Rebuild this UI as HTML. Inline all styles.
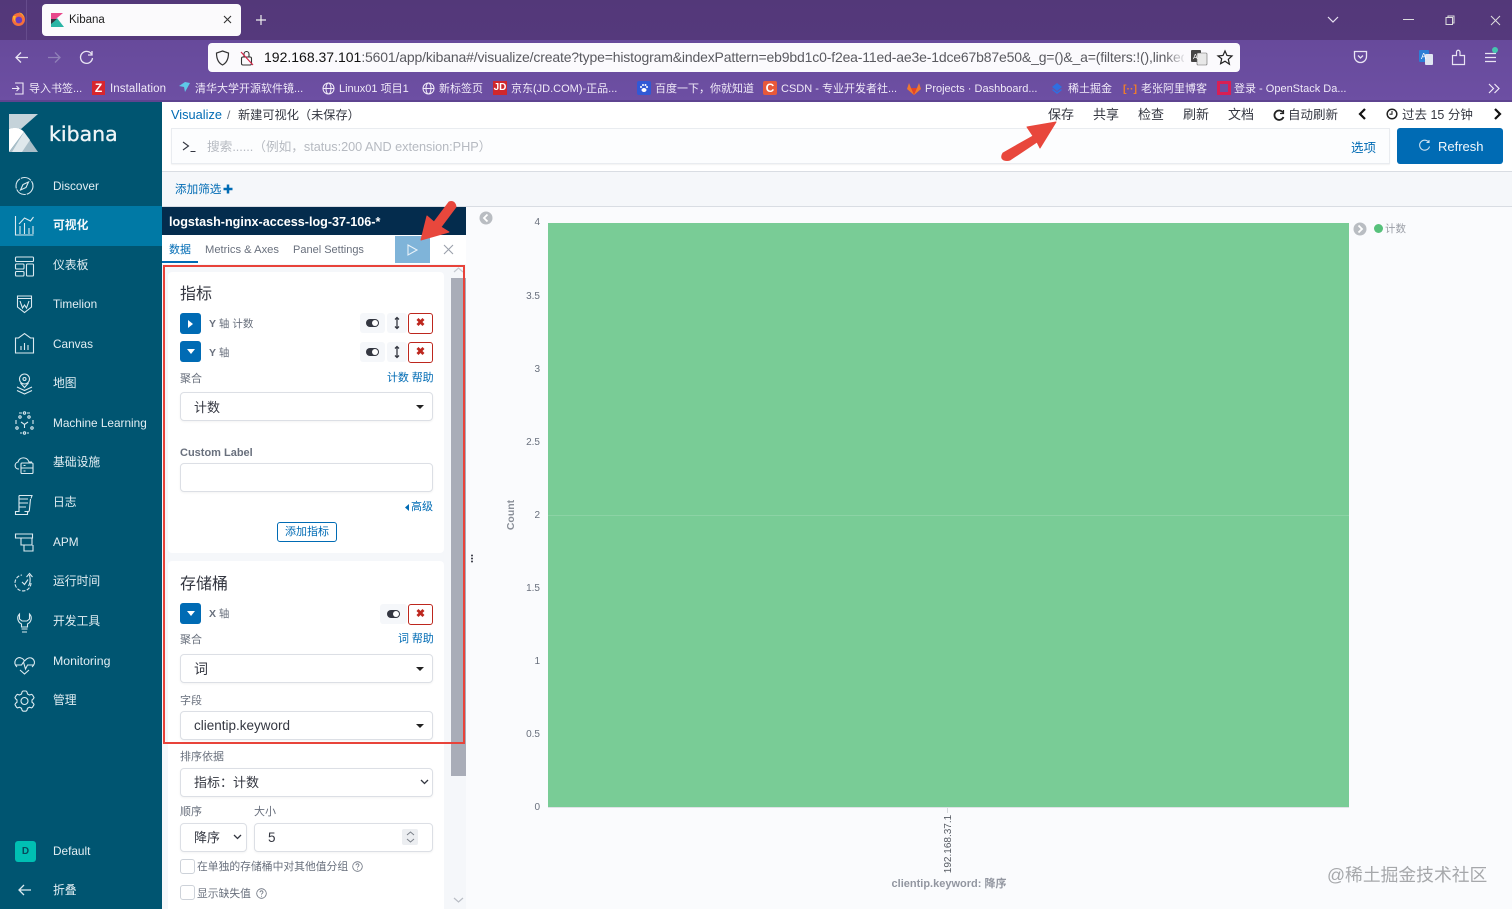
<!DOCTYPE html>
<html lang="zh"><head><meta charset="utf-8"><title>Kibana</title>
<style>
html,body{margin:0;padding:0;width:1512px;height:909px;overflow:hidden;background:#fafbfd}
body{position:relative;font-family:"Liberation Sans","Noto Sans CJK SC",sans-serif;}
.a{position:absolute}
.t{position:absolute;white-space:nowrap;line-height:16px;height:16px}
svg{position:absolute;overflow:visible}
.nav{color:#e2eef3;font-size:11.800px;left:53px}
.bm{color:#f0eaf8;font-size:11px;top:81px}
.top{color:#343741;font-size:13px;top:107px}
.lb{color:#69707d;font-size:11px;margin-top:.5px}
.blue{color:#006bb4}
.sel{position:absolute;left:180px;width:251px;height:27px;background:#fff;border:1px solid #dcdfe5;border-radius:4px;box-shadow:0 1px 2px rgba(0,0,0,.05)}
.sel span{position:absolute;left:13px;top:0;line-height:28px;font-size:13.500px;color:#343741;white-space:nowrap}
.caret{position:absolute;width:0;height:0;border-left:4px solid transparent;border-right:4px solid transparent;border-top:4px solid #222}
.ib{position:absolute;width:21px;height:21px;border-radius:3px;background:#006bb4}
.ib2{position:absolute;background:#f5f7fa;border-radius:3px;height:20px}
.x{position:absolute;width:23px;height:19px;border:1px solid #bd271e;border-radius:3px;background:#fff;color:#bd271e;text-align:center;line-height:19px;font-size:11px;font-weight:bold}
.ytick{position:absolute;left:510px;width:30px;text-align:right;color:#69707d;font-size:10px;line-height:12px}
</style></head><body>

<!-- Browser chrome -->
<div class="a" style="left:0;top:0;width:1512px;height:40px;background:linear-gradient(#533879,#55397c)"></div>
<div class="a" style="left:0;top:40px;width:1512px;height:60px;background:linear-gradient(#674a9b,#6d4fa3)"></div>
<div class="a" style="left:0;top:100px;width:1512px;height:2px;background:#5e4490"></div>
<div class="a" style="left:26px;top:0;width:1px;height:40px;background:#664c8c"></div>
<!-- firefox icon -->
<svg style="left:11px;top:11px" width="15" height="16" viewBox="0 0 15 16"><circle cx="7.500" cy="8.500" r="6.500" fill="#f5703a"/><circle cx="7.800" cy="9" r="3.400" fill="#6a3cc0"/><path d="M7 1c2 1 5 3 6 6 0-2-1-4-3-5zM2 5c0 3 1 5 3 6-1-2-1-4 0-6z" fill="#ffb52e"/></svg>
<!-- tab -->
<div class="a" style="left:42px;top:4px;width:199px;height:32px;background:#fbfafc;border-radius:4px"></div>
<svg style="left:51px;top:13px" width="13" height="14" viewBox="0 0 13 14"><path d="M0 0h12L0 10z" fill="#e8478b"/><path d="M0 14V10l6-5 7 9z" fill="#2ab5a5"/><path d="M0 6l5 0 1 0-6 5z" fill="#343741"/></svg>
<div class="t" style="left:69px;top:12px;font-size:11.500px;color:#222">Kibana</div>
<svg style="left:223px;top:15px" width="9" height="9" fill="none" stroke="#333" stroke-width="1.100"><path d="M1 1l7 7M8 1L1 8"/></svg>
<svg style="left:255px;top:14px" width="12" height="12" fill="none" stroke="#eee" stroke-width="1.200"><path d="M6 1v10M1 6h10"/></svg>
<!-- window controls -->
<svg style="left:1327px;top:15px" width="13" height="9" fill="none" stroke="#e8e2f2" stroke-width="1.200"><path d="M1 2l5 5 5-5"/></svg>
<svg style="left:1403px;top:19px" width="11" height="2"><rect width="11" height="1" fill="#ddd"/></svg>
<svg style="left:1445px;top:15px" width="11" height="11" fill="none" stroke="#ddd"><rect x="1" y="2.500" width="6.500" height="7"/><path d="M3 2.500V1h6v7H7.500"/></svg>
<svg style="left:1490px;top:15px" width="11" height="11" fill="none" stroke="#ddd"><path d="M1 1l9 9M10 1l-9 9"/></svg>
<!-- nav buttons -->
<svg style="left:15px;top:51px" width="14" height="13" fill="none" stroke="#e9e4f3" stroke-width="1.300"><path d="M13 6.500H1M6 1.500l-5 5 5 5"/></svg>
<svg style="left:47px;top:51px" width="14" height="13" fill="none" stroke="#9080b8" stroke-width="1.300"><path d="M1 6.500h12M8 1.500l5 5-5 5"/></svg>
<svg style="left:79px;top:50px" width="15" height="15" fill="none" stroke="#e9e4f3" stroke-width="1.300"><path d="M12.500 4A6 6 0 1 0 13.500 8M13 1v4H9"/></svg>
<!-- url bar -->
<div class="a" style="left:208px;top:43px;width:1032px;height:29px;background:#fbfafd;border-radius:4px"></div>
<svg style="left:215px;top:50px" width="15" height="16" fill="none" stroke="#333" stroke-width="1.200"><path d="M7.500 1l6 2c0 6-2 10-6 12C3.500 13 1.500 9 1.500 3z"/></svg>
<svg style="left:240px;top:50px" width="14" height="16" fill="none" stroke="#333" stroke-width="1.100"><rect x="1.500" y="7" width="10" height="8" rx="1.500"/><path d="M4 7V4a2.500 2.500 0 0 1 5 0v3"/><path d="M1 2l12 13" stroke="#d7264a" stroke-width="1.200"/></svg>
<div class="t" style="left:264px;top:49px;font-size:14px;line-height:17px;height:17px;width:920px;overflow:hidden;color:#5a5a60;letter-spacing:-.165px"><span style="color:#111;letter-spacing:0">192.168.37.101</span>:5601/app/kibana#/visualize/create?type=histogram&amp;indexPattern=eb9bd1c0-f2ea-11ed-ae3e-1dce67b87e50&amp;_g=()&amp;_a=(filters:!(),linked:!</div>
<div class="a" style="left:1165px;top:43px;width:22px;height:29px;background:linear-gradient(90deg,rgba(251,250,253,0),#fbfafd)"></div>
<svg style="left:1191px;top:50px" width="17" height="15"><rect x="0" y="0" width="10" height="12" rx="1" fill="#444"/><rect x="6" y="3" width="10" height="12" rx="1" fill="#e8e8e8" stroke="#666" stroke-width=".6"/><text x="2" y="9" font-size="7" fill="#fff" font-family="Liberation Sans">A</text></svg>
<svg style="left:1217px;top:50px" width="16" height="15" fill="none" stroke="#222" stroke-width="1.200"><path d="M8 1l2 4.500 5 .5-3.700 3.300 1.100 4.900L8 11.200 3.600 13.700l1.100-4.900L1 6l5-.5z"/></svg>
<svg style="left:1353px;top:50px" width="15" height="14" fill="none" stroke="#e9e4f3" stroke-width="1.300"><path d="M1.500 1.500h12v5a6 6 0 0 1-12 0z"/><path d="M5 5.500l2.500 2.500L10 5.500"/></svg>
<svg style="left:1418px;top:49px" width="16" height="17"><rect x="1" y="1" width="10" height="12" rx="1" fill="#2c7fd6"/><rect x="7" y="5" width="8" height="11" rx="1" fill="#dfe6f2"/><text x="3" y="10" font-size="8" fill="#fff" font-family="Liberation Sans">A</text></svg>
<svg style="left:1451px;top:49px" width="15" height="17" fill="none" stroke="#e9e4f3" stroke-width="1.200"><path d="M1.500 6.500h4V3a1.700 1.700 0 0 1 3.500 0v3.500h4.500v9h-12z"/></svg>
<svg style="left:1484px;top:52px" width="13" height="11" fill="none" stroke="#e9e4f3" stroke-width="1.200"><path d="M1 1.500h11M1 5.500h11M1 9.500h11"/></svg>
<div class="a" style="left:1492px;top:47px;width:6px;height:6px;border-radius:50%;background:#45c4b0"></div>
<!-- bookmarks -->
<svg style="left:11px;top:82px" width="13" height="13" fill="none" stroke="#f0eaf8" stroke-width="1.100"><path d="M4 1h8v11H4M1 6.500h7M5.500 4l2.500 2.500L5.500 9"/></svg>
<div class="t bm" style="left:29px">导入书签...</div>
<div class="a" style="left:92px;top:81px;width:13px;height:14px;background:#d8262e;color:#fff;font:bold 12px/14px 'Liberation Sans';text-align:center">Z</div>
<div class="t bm" style="left:110px;font-size:11.500px;letter-spacing:.1px">Installation</div>
<svg style="left:178px;top:81px" width="13" height="13"><path d="M1 5l6-4 5 1-5 9-1-5z" fill="#5ec8e8"/></svg>
<div class="t bm" style="left:195px">清华大学开源软件镜...</div>
<svg style="left:322px;top:82px" width="13" height="13" fill="none" stroke="#f0eaf8"><circle cx="6.500" cy="6.500" r="5.500"/><ellipse cx="6.500" cy="6.500" rx="2.500" ry="5.500"/><path d="M1 6.500h11"/></svg>
<div class="t bm" style="left:339px">Linux01 项目1</div>
<svg style="left:422px;top:82px" width="13" height="13" fill="none" stroke="#f0eaf8"><circle cx="6.500" cy="6.500" r="5.500"/><ellipse cx="6.500" cy="6.500" rx="2.500" ry="5.500"/><path d="M1 6.500h11"/></svg>
<div class="t bm" style="left:439px">新标签页</div>
<div class="a" style="left:493px;top:81px;width:14px;height:14px;background:#d0272c;color:#fff;font:bold 10px/14px 'Liberation Sans';text-align:center">JD</div>
<div class="t bm" style="left:511px">京东(JD.COM)-正品...</div>
<div class="a" style="left:637px;top:81px;width:14px;height:14px;background:#3159d6;border-radius:2px"></div>
<svg style="left:639px;top:83px" width="10" height="10"><ellipse cx="5" cy="7" rx="2.500" ry="2" fill="#fff"/><circle cx="2" cy="4" r="1" fill="#fff"/><circle cx="8" cy="4" r="1" fill="#fff"/><circle cx="4" cy="2" r="1" fill="#fff"/><circle cx="6.500" cy="2" r="1" fill="#fff"/></svg>
<div class="t bm" style="left:655px">百度一下，你就知道</div>
<div class="a" style="left:763px;top:81px;width:14px;height:14px;background:#e8593a;color:#fff;font:bold 12px/14px 'Liberation Sans';text-align:center;border-radius:2px">C</div>
<div class="t bm" style="left:781px">CSDN - 专业开发者社...</div>
<svg style="left:907px;top:82px" width="14" height="13"><path d="M7 13L0 7l2-6 2 5h6l2-5 2 6z" fill="#f0782e"/><path d="M7 13L4 6h6z" fill="#e24329"/></svg>
<div class="t bm" style="left:925px">Projects · Dashboard...</div>
<svg style="left:1050px;top:81px" width="14" height="14"><path d="M7 2l5 4-5 4-5-4z" fill="#2f6fe0"/><path d="M3 8l4 3 4-3 1 1-5 4-5-4z" fill="#2f6fe0"/></svg>
<div class="t bm" style="left:1068px">稀土掘金</div>
<div class="t" style="left:1123px;top:81px;color:#f07e2a;font-size:10.500px;font-weight:bold">[··]</div>
<div class="t bm" style="left:1141px">老张阿里博客</div>
<div class="a" style="left:1217px;top:81px;width:14px;height:14px;background:#d91f55"></div>
<div class="a" style="left:1220px;top:84px;width:8px;height:8px;background:#6d4fa3"></div>
<div class="t bm" style="left:1234px">登录 - OpenStack Da...</div>
<svg style="left:1488px;top:83px" width="12" height="11" fill="none" stroke="#f0eaf8" stroke-width="1.200"><path d="M1 1l4.500 4.500L1 10M6.500 1L11 5.500 6.500 10"/></svg>

<!-- Sidebar -->
<div class="a" style="left:0;top:102px;width:162px;height:807px;background:#005571"></div>
<div class="a" style="left:0;top:206px;width:162px;height:40px;background:#0079a5"></div>
<svg style="left:9px;top:114px" width="30" height="38" viewBox="0 0 30 38"><path d="M0 0h29L12 15C8 14 3 14 0 15z" fill="#c5d3da"/><path d="M0 15c6-2 12-1 15 3L0 38z" fill="#fff"/><path d="M15 18l14 20H0z" fill="#a9bec8"/><path d="M15 18L3 38h10l8-12z" fill="#dfe8ec"/></svg>
<div class="t" style="left:49px;top:120px;height:28px;line-height:28px;color:#eef5f7;font-family:'DejaVu Sans',sans-serif;font-size:20.500px;-webkit-text-stroke:.35px #eef5f7">kibana</div>

<div class="t nav" style="top:178px">Discover</div>
<div class="t nav" style="top:217px;font-weight:bold;color:#f2f8fb">可视化</div>
<div class="t nav" style="top:257px">仪表板</div>
<div class="t nav" style="top:296px">Timelion</div>
<div class="t nav" style="top:336px">Canvas</div>
<div class="t nav" style="top:375px">地图</div>
<div class="t nav" style="top:415px">Machine Learning</div>
<div class="t nav" style="top:454px">基础设施</div>
<div class="t nav" style="top:494px">日志</div>
<div class="t nav" style="top:534px">APM</div>
<div class="t nav" style="top:573px">运行时间</div>
<div class="t nav" style="top:613px">开发工具</div>
<div class="t nav" style="top:653px;font-size:12.300px">Monitoring</div>
<div class="t nav" style="top:692px">管理</div>
<div class="t nav" style="top:843px">Default</div>
<div class="t nav" style="top:882px">折叠</div>

<svg style="left:0;top:102px" width="162" height="807" fill="none" stroke="#dbeaf0" stroke-width="1.100">
 <!-- discover center 24,84 -->
 <circle cx="24.500" cy="84" r="8.500" stroke-dasharray="11 1"/><path d="M28.500 80l-5.500 2.500-2.500 5.500 5.500-2.500z"/>
 <!-- visualize -->
 <path d="M15.500 114v19h18M20 132v-8M24.500 132v-11M29 132v-6M33 132v-8M19 122l5.500-6 6 3 3-4"/>
 <!-- dashboard -->
 <rect x="15.500" y="155" width="18" height="4.500" rx="1"/><rect x="15.500" y="162" width="8.500" height="5" rx="1"/><rect x="15.500" y="169.500" width="8.500" height="4.500" rx="1"/><rect x="26.500" y="162" width="7" height="12" rx="1"/>
 <!-- timelion -->
 <path d="M17.500 194h14v11l-7 5.500-7-5.500zM17.500 196.500h14M20 199l2.500 7 2-3 2 3 2.500-7"/>
 <!-- canvas -->
 <path d="M15.500 236h3l6-4.500 6 4.500h3v15h-18zM21 248v-4M24.500 248v-7M28 248v-5"/>
 <!-- maps -->
 <circle cx="24.500" cy="277" r="5"/><circle cx="24.500" cy="277" r="1.500"/><path d="M20.500 281l4 4.500 4-4.500M17 285l7.500 3.500 7.500-3.500M17 288.500l7.500 3.500 7.500-3.500"/>
 <!-- ML -->
 <path d="M19 311h3M27 311h3M16 318v4M33 318v4M20 331h2M27 331h2M21 320l3.500 2.500 3.500-2.500M24.500 322v4"/><circle cx="20" cy="315" r="1.200"/><circle cx="29" cy="315" r="1.200"/><circle cx="24.500" cy="311" r="1.200"/><circle cx="24.500" cy="331" r="1.200"/><circle cx="17" cy="326" r="1.200"/><circle cx="32" cy="326" r="1.200"/>
 <!-- infra -->
 <path d="M19 367c-5 0-5-6-1-7 1-5 9-6 11 0h3"/><rect x="21" y="361" width="12" height="10.500" rx="1"/><path d="M21 366h12M23.500 363.500h2M23.500 369h2"/>
 <!-- logs -->
 <path d="M19 393.500h13l-1 3M19 393.500v16h-3.500v3h12v-3h-3M19 397h9M19 401h9M19 405h7M27.500 410c1.500 0 2-1 2-3l1-10"/>
 <!-- APM -->
 <path d="M15.500 432v4h17v-4zM21 436v7h11v-7M24 443v6h9v-6"/>
 <!-- uptime -->
 <path d="M31 481a8 8 0 1 1-9-8" stroke-dasharray="3.500 1.500"/><path d="M22 480l2.500 2.500 3.500-5M28.500 484c2-3 2-7 1-11M26.500 475l3-3.500 3 3.500"/>
 <!-- dev tools -->
 <path d="M19.500 512c-3 3-2 8 2 10v3h6v-3c4-2 5-7 2-10v5l-2.500 2h-5l-2.500-2zM21.500 527h6M22 530h5"/>
 <!-- monitoring -->
 <path d="M17 565c-5-5 0-11 4-9 2 .5 3 2 3.500 3 1-1 2-2.500 4-3 4-1.500 9 4 3.500 9M15.500 563h6l2-3 2 7 2-4h6M20 568l4.500 4 4.500-4"/>
 <!-- gear -->
 <circle cx="24.500" cy="599" r="3.500"/><path d="M22 590l1-1h3l1 1 .5 2 2 1 2-.7 1 .7 1.500 2.500-.5 1.200-1.500 1.300v2.200l1.500 1.300.5 1.200-1.500 2.500-1 .7-2-.7-2 1-.5 2-1 1h-3l-1-1-.5-2-2-1-2 .7-1-.7-1.500-2.500.5-1.200 1.500-1.300V598l-1.500-1.300-.5-1.200 1.500-2.500 1-.7 2 .7 2-1z"/>
 <!-- collapse -->
 <path d="M31 788H19M24 783l-5 5 5 5" stroke-width="1.300"/>
</svg>
<div class="a" style="left:15px;top:841px;width:21px;height:21px;background:#00bfb3;border-radius:3px;color:#064a5c;font-size:10px;font-weight:bold;line-height:21px;text-align:center">D</div>

<!-- Top bar -->
<div class="a" style="left:162px;top:102px;width:1350px;height:70px;background:#fff;border-bottom:1px solid #d9dde3;box-sizing:border-box"></div>
<div class="t" style="left:171px;top:107px;font-size:12.800px;color:#006bb4">Visualize</div>
<div class="t" style="left:227px;top:107px;font-size:12px;color:#69707d">/</div>
<div class="t" style="left:238px;top:107px;font-size:12.200px;color:#343741">新建可视化（未保存）</div>
<div class="t top" style="left:1048px">保存</div>
<div class="t top" style="left:1093px">共享</div>
<div class="t top" style="left:1138px">检查</div>
<div class="t top" style="left:1183px">刷新</div>
<div class="t top" style="left:1228px">文档</div>
<svg style="left:1273px;top:109px" width="12" height="12" fill="none" stroke="#222" stroke-width="1.800"><path d="M10 3.500A4.700 4.700 0 1 0 10.500 8"/><path d="M10.500 1v3.500H7" stroke-width="1.200"/></svg>
<div class="t top" style="left:1288px;font-size:12.500px">自动刷新</div>
<svg style="left:1358px;top:108px" width="9" height="12" fill="none" stroke="#111" stroke-width="2.200"><path d="M7 1L2 6l5 5"/></svg>
<svg style="left:1386px;top:108px" width="12" height="12" fill="none" stroke="#222" stroke-width="1.500"><circle cx="6" cy="6" r="4.800"/><path d="M6 3v3.200H3.500" stroke-width="1.100"/></svg>
<div class="t top" style="left:1402px;font-size:12.500px">过去 15 分钟</div>
<svg style="left:1493px;top:108px" width="9" height="12" fill="none" stroke="#111" stroke-width="2.200"><path d="M2 1l5 5-5 5"/></svg>
<!-- search -->
<div class="a" style="left:171px;top:128px;width:1219px;height:36px;box-sizing:border-box;background:#fcfdfe;border:1px solid #e9ecf0;box-shadow:0 1px 1px rgba(0,0,0,.05)"></div>
<svg style="left:182px;top:141px" width="14" height="12" fill="none" stroke="#343741" stroke-width="1.100"><path d="M1 1l5.500 4L1 9M8.500 10.500h5"/></svg>
<div class="t" style="left:207px;top:139px;font-size:12.700px;color:#b6bac1;letter-spacing:-.03px">搜索......（例如，status:200 AND extension:PHP）</div>
<div class="t" style="left:1351px;top:140px;font-size:12.500px;color:#006bb4">选项</div>
<div class="a" style="left:1397px;top:128px;width:106px;height:36px;background:#006bb4;border-radius:3px"></div>
<svg style="left:1418px;top:139px" width="13" height="13" fill="none" stroke="#cfe2f1" stroke-width="1.100"><path d="M10.500 3A5 5 0 1 0 11.500 7.500M11 1v2.500H8.500"/></svg>
<div class="t" style="left:1438px;top:139px;font-size:13px;color:#f2f8fc">Refresh</div>
<!-- filter bar -->
<div class="a" style="left:162px;top:172px;width:1350px;height:35px;background:#f5f7fa;border-bottom:1px solid #d9dde3;box-sizing:border-box"></div>
<div class="t blue" style="left:175px;top:182px;font-size:11.600px">添加筛选</div>
<svg style="left:223px;top:184px" width="10" height="10" fill="none" stroke="#006bb4" stroke-width="2.500"><path d="M5 .5v9M.5 5h9"/></svg>

<!-- Left panel -->
<div class="a" style="left:162px;top:207px;width:304px;height:702px;background:#f5f7fa"></div>
<div class="a" style="left:162px;top:207px;width:304px;height:28px;background:#042c4d"></div>
<div class="t" style="left:169px;top:213.500px;font-size:12.600px;font-weight:bold;color:#fff">logstash-nginx-access-log-37-106-*</div>
<div class="a" style="left:162px;top:235px;width:304px;height:29px;background:#fff"></div>
<div class="t blue" style="left:169px;top:242px;font-size:11px">数据</div>
<div class="a" style="left:162px;top:261px;width:36px;height:2px;background:#006bb4"></div>
<div class="t" style="left:205px;top:242px;font-size:11.200px;color:#69707d">Metrics &amp; Axes</div>
<div class="t" style="left:293px;top:242px;font-size:11px;color:#69707d">Panel Settings</div>
<div class="a" style="left:395px;top:236px;width:35px;height:27px;background:#7fb4d9"></div>
<svg style="left:407px;top:244px" width="11" height="12" fill="none" stroke="#e8f2f9" stroke-width="1.100"><path d="M1 1l9 5-9 5z"/></svg>
<svg style="left:443px;top:244px" width="11" height="11" fill="none" stroke="#9aa0ab" stroke-width="1.100"><path d="M1 1l9 9M10 1l-9 9"/></svg>

<!-- cards -->
<div class="a" style="left:168px;top:272px;width:276px;height:281px;background:#fff;border-radius:4px"></div>
<div class="a" style="left:168px;top:561px;width:276px;height:348px;background:#fff;border-radius:4px 4px 0 0"></div>
<div class="t" style="left:180px;top:287px;height:20px;line-height:16px;font-size:16px;color:#343741">指标</div>

<div class="ib" style="left:180px;top:313px"></div>
<svg style="left:188px;top:320px" width="6" height="8"><path d="M0 0l5 4-5 4z" fill="#fff"/></svg>
<div class="t lb" style="left:209px;top:315px;font-size:10.500px"><b>Y</b> 轴 计数</div>
<div class="ib2" style="left:360px;top:313px;width:25px"></div>
<div class="ib2" style="left:387px;top:313px;width:20px"></div>
<svg style="left:366px;top:319px" width="13" height="8"><rect width="13" height="8" rx="4" fill="#343741"/><circle cx="9" cy="4" r="3" fill="#fff"/></svg>
<svg style="left:394px;top:317px" width="6" height="12" fill="none" stroke="#343741" stroke-width="1.300"><path d="M3 1v10M1 2.500L3 .5l2 2M1 9.500l2 2 2-2"/></svg>
<div class="x" style="left:408px;top:313px">✖</div>

<div class="ib" style="left:180px;top:341px"></div>
<svg style="left:187px;top:349px" width="8" height="6"><path d="M0 0h8L4 5z" fill="#fff"/></svg>
<div class="t lb" style="left:209px;top:344px;font-size:10.500px"><b>Y</b> 轴</div>
<div class="ib2" style="left:360px;top:342px;width:25px"></div>
<div class="ib2" style="left:387px;top:342px;width:20px"></div>
<svg style="left:366px;top:348px" width="13" height="8"><rect width="13" height="8" rx="4" fill="#343741"/><circle cx="9" cy="4" r="3" fill="#fff"/></svg>
<svg style="left:394px;top:346px" width="6" height="12" fill="none" stroke="#343741" stroke-width="1.300"><path d="M3 1v10M1 2.500L3 .5l2 2M1 9.500l2 2 2-2"/></svg>
<div class="x" style="left:408px;top:342px">✖</div>

<div class="t lb" style="left:180px;top:370px">聚合</div>
<div class="t blue" style="left:387px;top:370px;font-size:11px;letter-spacing:-.1px">计数 帮助</div>
<div class="sel" style="top:392px"><span style="line-height:30px;font-size:13px">计数</span><i class="caret" style="left:235px;top:12px"></i></div>

<div class="t" style="left:180px;top:445px;font-size:11px;font-weight:bold;color:#69707d">Custom Label</div>
<div class="sel" style="top:463px"></div>
<svg style="left:405px;top:504px" width="4" height="7"><path d="M4 0v7L0 3.500z" fill="#006bb4"/></svg>
<div class="t blue" style="left:411px;top:499px;font-size:11px">高级</div>
<div class="a" style="left:277px;top:522px;width:58px;height:18px;border:1px solid #006bb4;border-radius:3px;color:#006bb4;font-size:11px;line-height:19px;text-align:center">添加指标</div>

<div class="t" style="left:180px;top:577px;height:20px;line-height:16px;font-size:16px;color:#343741">存储桶</div>
<div class="ib" style="left:180px;top:603px"></div>
<svg style="left:187px;top:611px" width="8" height="6"><path d="M0 0h8L4 5z" fill="#fff"/></svg>
<div class="t lb" style="left:209px;top:605px;font-size:10.500px"><b>X</b> 轴</div>
<div class="ib2" style="left:380px;top:604px;width:27px"></div>
<svg style="left:387px;top:610px" width="13" height="8"><rect width="13" height="8" rx="4" fill="#343741"/><circle cx="9" cy="4" r="3" fill="#fff"/></svg>
<div class="x" style="left:408px;top:604px">✖</div>
<div class="t lb" style="left:180px;top:631px">聚合</div>
<div class="t blue" style="left:398px;top:631px;font-size:11px;letter-spacing:-.1px">词 帮助</div>
<div class="sel" style="top:654px"><span style="font-size:14px">词</span><i class="caret" style="left:235px;top:12px"></i></div>
<div class="t lb" style="left:180px;top:692px">字段</div>
<div class="sel" style="top:711px"><span>clientip.keyword</span><i class="caret" style="left:235px;top:12px"></i></div>
<div class="t lb" style="left:180px;top:748px">排序依据</div>
<div class="sel" style="top:768px"><span style="font-size:13px">指标：计数</span></div>
<svg style="left:420px;top:779px" width="9" height="6" fill="none" stroke="#343741" stroke-width="1.300"><path d="M1 1l3.500 3.500L8 1"/></svg>
<div class="t lb" style="left:180px;top:803px">顺序</div>
<div class="t lb" style="left:254px;top:803px">大小</div>
<div class="sel" style="top:823px;width:65px"><span style="font-size:13px">降序</span></div>
<svg style="left:233px;top:834px" width="9" height="6" fill="none" stroke="#343741" stroke-width="1.300"><path d="M1 1l3.500 3.500L8 1"/></svg>
<div class="sel" style="top:823px;left:254px;width:177px"><span>5</span></div>
<div class="a" style="left:402px;top:829px;width:16px;height:16px;background:#eceef1;border-radius:2px"></div>
<svg style="left:406px;top:831px" width="9" height="12" fill="none" stroke="#7b8089"><path d="M1 4l3.500-3L8 4M1 8l3.500 3L8 8"/></svg>
<div class="a" style="left:180px;top:859px;width:13px;height:13px;border:1px solid #cdd2d9;border-radius:3px;background:#fff"></div>
<div class="t lb" style="left:197px;top:858px;font-size:10.800px">在单独的存储桶中对其他值分组</div>
<svg style="left:352px;top:861px" width="11" height="11" fill="none" stroke="#69707d" stroke-width=".8"><circle cx="5.500" cy="5.500" r="4.800"/><path d="M4 4.300c0-2 3-2 3 0 0 1-1.500 1-1.500 2.300M5.500 7.700v1"/></svg>
<div class="a" style="left:180px;top:885px;width:13px;height:13px;border:1px solid #cdd2d9;border-radius:3px;background:#fff"></div>
<div class="t lb" style="left:197px;top:885px;font-size:10.800px">显示缺失值</div>
<svg style="left:256px;top:888px" width="11" height="11" fill="none" stroke="#69707d" stroke-width=".8"><circle cx="5.500" cy="5.500" r="4.800"/><path d="M4 4.300c0-2 3-2 3 0 0 1-1.500 1-1.500 2.300M5.500 7.700v1"/></svg>

<!-- scrollbar -->
<div class="a" style="left:451px;top:278px;width:15px;height:498px;background:#a9adb8"></div>
<svg style="left:453px;top:266px" width="11" height="7" fill="none" stroke="#c5c9d0" stroke-width="1.200"><path d="M1 6l4.500-4L10 6"/></svg>
<svg style="left:453px;top:897px" width="11" height="7" fill="none" stroke="#b9bdc5" stroke-width="1.200"><path d="M1 1l4.500 4L10 1"/></svg>
<!-- red rectangle -->
<div class="a" style="left:163px;top:265px;width:302px;height:479px;box-sizing:border-box;border:2px solid #e8433a"></div>
<!-- drag handle -->
<svg style="left:470px;top:554px" width="4" height="10"><circle cx="2" cy="1.500" r="1" fill="#343741"/><circle cx="2" cy="4.500" r="1" fill="#343741"/><circle cx="2" cy="7.500" r="1" fill="#343741"/></svg>

<!-- Chart -->
<svg style="left:479px;top:211px" width="14" height="14"><circle cx="7" cy="7" r="6.500" fill="#b9bdc2"/><path d="M8.500 3.500L5 7l3.500 3.500" fill="none" stroke="#fff" stroke-width="1.800"/></svg>
<div class="a" style="left:548px;top:223px;width:801px;height:584px;background:#79cc96"></div>
<div class="a" style="left:548px;top:515px;width:801px;height:1px;background:#8cd3a5"></div>
<div class="a" style="left:548px;top:807px;width:801px;height:1px;background:#dfe2e6"></div>
<div class="a" style="left:947px;top:808px;width:1px;height:5px;background:#d5d8dc"></div>
<div class="ytick" style="top:217px">4</div>
<div class="ytick" style="top:291px">3.5</div>
<div class="ytick" style="top:364px">3</div>
<div class="ytick" style="top:437px">2.5</div>
<div class="ytick" style="top:510px">2</div>
<div class="ytick" style="top:583px">1.5</div>
<div class="ytick" style="top:656px">1</div>
<div class="ytick" style="top:729px">0.5</div>
<div class="ytick" style="top:802px">0</div>
<div class="t" style="left:491px;top:507px;width:40px;text-align:center;font-size:10.500px;font-weight:bold;color:#8a8f98;transform:rotate(-90deg)">Count</div>
<div class="t" style="left:909px;top:836px;width:80px;text-align:center;font-size:10px;color:#565b63;transform:rotate(-90deg)">192.168.37.1</div>
<div class="t" style="left:870px;top:875.500px;width:158px;text-align:center;font-size:11px;font-weight:bold;color:#9296a0">clientip.keyword: 降序</div>
<svg style="left:1353px;top:222px" width="14" height="14"><circle cx="7" cy="7" r="6.500" fill="#b9bdc2"/><path d="M5.500 3.500L9 7l-3.500 3.500" fill="none" stroke="#fff" stroke-width="1.800"/></svg>
<div class="a" style="left:1374px;top:224px;width:9px;height:9px;border-radius:50%;background:#57c17b"></div>
<div class="t" style="left:1385px;top:220.500px;font-size:10.500px;color:#9a9ea6">计数</div>
<div class="t" style="left:1327px;top:865px;height:20px;line-height:20px;font-size:17.800px;color:#a6a8ab">@稀土掘金技术社区</div>

<!-- Red arrows -->
<svg style="left:0;top:0" width="1512" height="909">
 <path d="M1056 122L1027 127L1033 136L1003 153Q1000 158 1004 160Q1007 161 1010 160L1037 142L1040 148Z" fill="#e8473c" stroke="#e8473c" stroke-linejoin="round"/>
 <path d="M421 240L427 216L434 222L449 202Q455 200 456 207L441 227L449 232Z" fill="#e8473c" stroke="#e8473c" stroke-linejoin="round"/>
</svg>
</body></html>
